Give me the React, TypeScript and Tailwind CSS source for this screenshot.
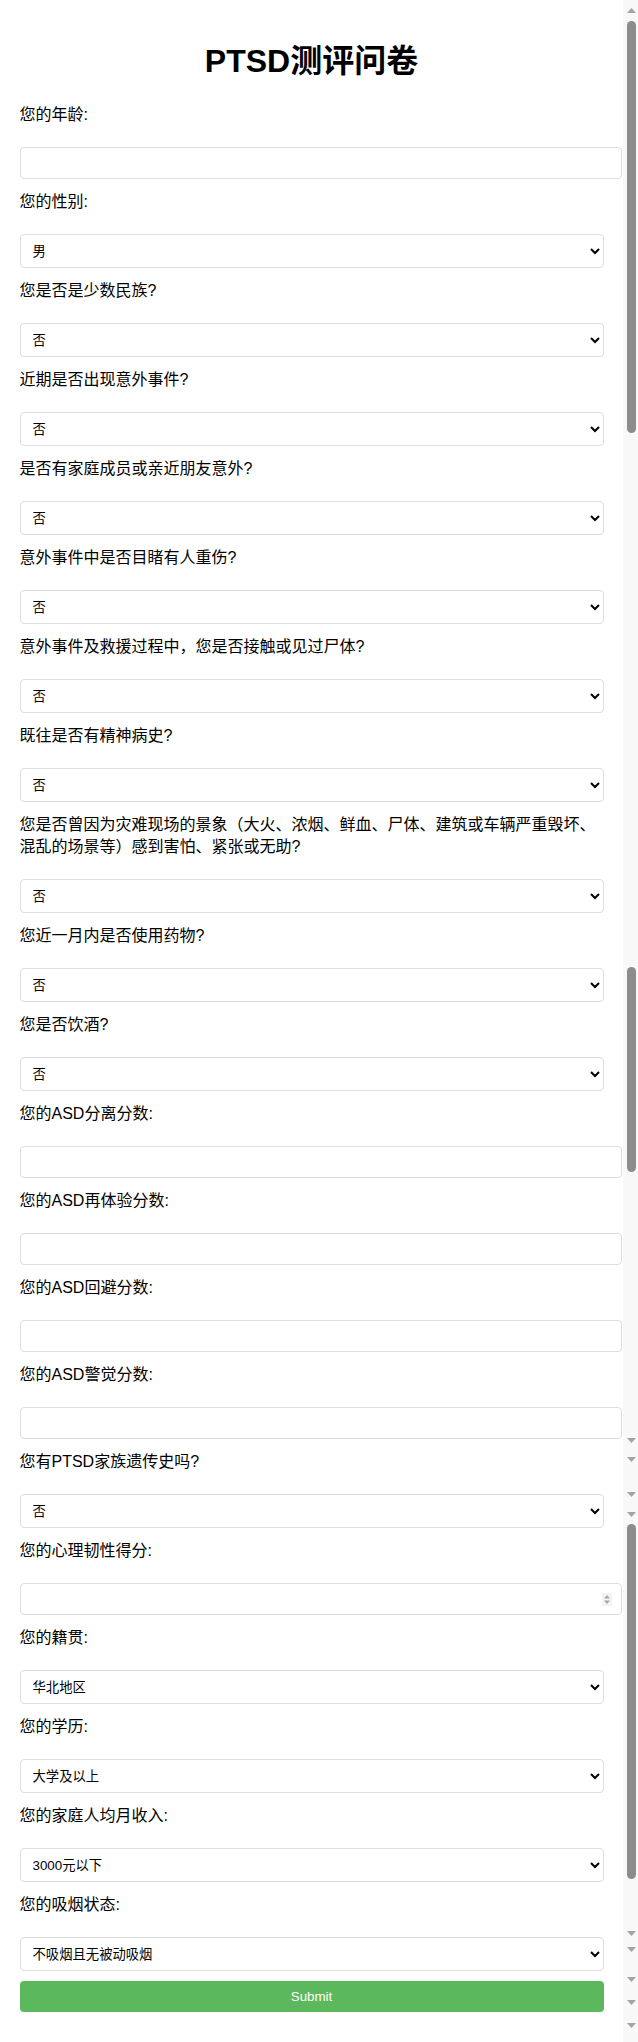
import React from "react";

type Field = {
  label: string;
  kind: "text" | "select" | "number";
  options?: string[];
};

const yn = ["否", "是"];

const fields: Field[] = [
  { label: "您的年龄:", kind: "text" },
  { label: "您的性别:", kind: "select", options: ["男", "女"] },
  { label: "您是否是少数民族?", kind: "select", options: yn },
  { label: "近期是否出现意外事件?", kind: "select", options: yn },
  { label: "是否有家庭成员或亲近朋友意外?", kind: "select", options: yn },
  { label: "意外事件中是否目睹有人重伤?", kind: "select", options: yn },
  { label: "意外事件及救援过程中，您是否接触或见过尸体?", kind: "select", options: yn },
  { label: "既往是否有精神病史?", kind: "select", options: yn },
  {
    label:
      "您是否曾因为灾难现场的景象（大火、浓烟、鲜血、尸体、建筑或车辆严重毁坏、混乱的场景等）感到害怕、紧张或无助?",
    kind: "select",
    options: yn,
  },
  { label: "您近一月内是否使用药物?", kind: "select", options: yn },
  { label: "您是否饮酒?", kind: "select", options: yn },
  { label: "您的ASD分离分数:", kind: "text" },
  { label: "您的ASD再体验分数:", kind: "text" },
  { label: "您的ASD回避分数:", kind: "text" },
  { label: "您的ASD警觉分数:", kind: "text" },
  { label: "您有PTSD家族遗传史吗?", kind: "select", options: yn },
  { label: "您的心理韧性得分:", kind: "number" },
  {
    label: "您的籍贯:",
    kind: "select",
    options: ["华北地区", "东北地区", "华东地区", "华中地区", "华南地区", "西南地区", "西北地区"],
  },
  { label: "您的学历:", kind: "select", options: ["大学及以上", "高中", "初中及以下"] },
  {
    label: "您的家庭人均月收入:",
    kind: "select",
    options: ["3000元以下", "3000-5000元", "5000元以上"],
  },
  {
    label: "您的吸烟状态:",
    kind: "select",
    options: ["不吸烟且无被动吸烟", "不吸烟但被动吸烟", "吸烟"],
  },
];

function Spinner() {
  return (
    <svg width="10" height="13" viewBox="0 0 10 13" className="block">
      <rect x="0" y="0" width="10" height="13" fill="#f3f3f3" />
      <polygon points="2,5.5 8,5.5 5,2" fill="#a8a8a8" />
      <polygon points="2,7.5 8,7.5 5,11" fill="#a8a8a8" />
    </svg>
  );
}

function TriUp() {
  return (
    <svg width="9" height="5" viewBox="0 0 9 5" className="block">
      <polygon points="0,5 9,5 4.5,0" fill="#a3a3a3" />
    </svg>
  );
}

function TriDown() {
  return (
    <svg width="9" height="5" viewBox="0 0 9 5" className="block">
      <polygon points="0,0 9,0 4.5,5" fill="#a3a3a3" />
    </svg>
  );
}

function Control({ f }: { f: Field }) {
  if (f.kind === "select") {
    return (
      <select
        defaultValue={f.options![0]}
        className="mt-[21px] block w-[584px] h-[34px] border border-[#dddddd] rounded-[4px] bg-white pl-[8px] text-[13.33px] text-black"
      >
        {f.options!.map((o) => (
          <option key={o} value={o}>
            {o}
          </option>
        ))}
      </select>
    );
  }
  if (f.kind === "number") {
    return (
      <div className="mt-[21px] relative w-[602px] h-[32px]">
        <input
          type="text"
          inputMode="numeric"
          className="block w-[602px] h-[32px] border border-[#dddddd] rounded-[4px] bg-white px-[8px] text-[13.33px] text-black"
        />
        <div className="absolute right-[10px] top-[10px]">
          <Spinner />
        </div>
      </div>
    );
  }
  return (
    <input
      type="text"
      className="mt-[21px] block w-[602px] h-[32px] border border-[#dddddd] rounded-[4px] bg-white px-[8px] text-[13.33px] text-black"
    />
  );
}

export default function App() {
  return (
    <div
      className="flex min-h-[2042px] w-[638px] bg-white text-black"
      style={{ fontFamily: '"Liberation Sans", Arial, "Noto Sans CJK SC", sans-serif' }}
    >
      <main className="w-[623px] shrink-0 pt-[43px] pl-[19.5px]">
        <h1 className="w-[584px] text-center text-[32px] leading-[37px] font-bold mb-[12px]">
          PTSD测评问卷
        </h1>
        <form className="w-[584px] flex flex-col" onSubmit={(e) => e.preventDefault()}>
          {fields.map((f) => (
            <div key={f.label} className="flex flex-col">
              <label className="mt-[12px] block text-[16px] leading-[22px]">{f.label}</label>
              <Control f={f} />
            </div>
          ))}
          <button
            type="submit"
            className="mt-[10px] w-[584px] h-[31px] rounded-[4px] bg-[#5cb85c] text-white text-[13.33px]"
          >
            Submit
          </button>
        </form>
      </main>
      <aside className="w-[15px] shrink-0 bg-[#f8f8f8] flex flex-col items-start">
        <div className="ml-[4px] mt-[8px]">
          <TriUp />
        </div>
        <div className="ml-[4px] mt-[8px] w-[9px] h-[412px] rounded-full bg-[#8c8c8c]" />
        <div className="ml-[4px] mt-[534px] w-[9px] h-[205px] rounded-full bg-[#8c8c8c]" />
        <div className="ml-[4px] mt-[266px]">
          <TriDown />
        </div>
        <div className="ml-[4px] mt-[14px]">
          <TriDown />
        </div>
        <div className="ml-[4px] mt-[30px]">
          <TriDown />
        </div>
        <div className="ml-[4px] mt-[15px]">
          <TriDown />
        </div>
        <div className="ml-[4px] mt-[7px] w-[9px] h-[355px] rounded-full bg-[#8c8c8c]" />
        <div className="ml-[4px] mt-[52px]">
          <TriDown />
        </div>
        <div className="ml-[4px] mt-[11px]">
          <TriDown />
        </div>
        <div className="ml-[4px] mt-[25px]">
          <TriDown />
        </div>
        <div className="ml-[4px] mt-[18px]">
          <TriDown />
        </div>
        <div className="ml-[4px] mt-[18px]">
          <TriDown />
        </div>
      </aside>
    </div>
  );
}
